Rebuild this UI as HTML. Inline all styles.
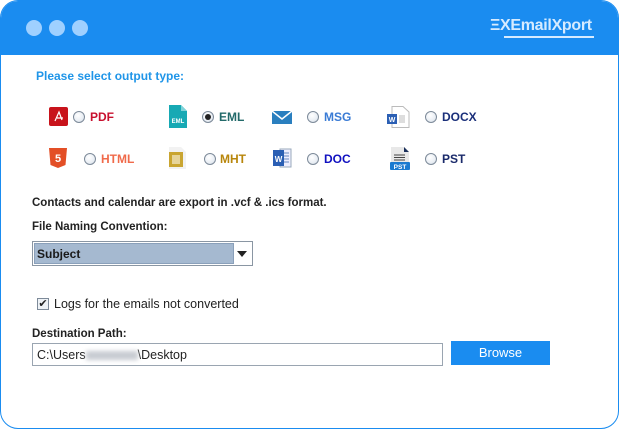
<!DOCTYPE html>
<html><head><meta charset="utf-8"><style>
*{margin:0;padding:0;box-sizing:border-box}
body{width:620px;height:430px;background:#fff;font-family:"Liberation Sans",Arial,sans-serif;position:relative;overflow:hidden}
.win{position:absolute;left:0;top:0;width:619px;height:429px;border:1.5px solid #1a8cf0;border-radius:18px;overflow:hidden;background:#fff}
.hdr{position:absolute;left:0;top:0;width:100%;height:54px;background:#1a8cf0}
.dot{position:absolute;top:19px;width:16px;height:16px;border-radius:50%;background:#9fd0ff}
.a{position:absolute;white-space:nowrap}
.lbl{font-weight:bold;font-size:12px;line-height:14px}
.radio{position:absolute;width:12px;height:12px;border-radius:50%;border:1px solid #7d8a99;background:radial-gradient(circle at 40% 35%,#fff 0,#e9eef4 60%,#c9d2dc 100%)}
.radio.on::after{content:"";position:absolute;left:2px;top:2px;width:6px;height:6px;border-radius:50%;background:#222}
.b11{font-weight:bold;font-size:11.5px;color:#222}
</style></head><body>
<div class="win">
<div class="hdr"></div>
<div class="dot" style="left:25px"></div><div class="dot" style="left:48px"></div><div class="dot" style="left:71px"></div>
<div class="a" style="left:489px;top:16px;color:#d6ebff;font-size:16px;font-weight:bold;letter-spacing:-0.3px">ΞX<span>EmailXport</span></div>
<div class="a" style="left:503px;top:35px;width:90px;height:1.5px;background:#d6ebff"></div>

<div class="a" style="left:35px;top:68px;color:#1f95e8;font-weight:bold;font-size:12px">Please select output type:</div>

<!-- row1 -->
<svg class="a" style="left:48px;top:106px" width="19" height="19"><rect width="19" height="19" rx="2" fill="#c8131b"/><path d="M6 14 L10 5 L13 13 M8 11 h6" stroke="#fff" stroke-width="1.2" fill="none"/></svg>
<div class="radio" style="left:72px;top:110px"></div>
<div class="a lbl" style="left:89px;top:109px;color:#c8102e">PDF</div>

<svg class="a" style="left:168px;top:104px" width="18" height="23"><path d="M0 0 H12 L18 6 V23 H0Z" fill="#17a9b4"/><path d="M12 0 V6 H18" fill="#7fd3d9"/><text x="9" y="18" font-size="6" font-weight="bold" fill="#fff" text-anchor="middle" font-family="Liberation Sans">EML</text></svg>
<div class="radio on" style="left:201px;top:110px"></div>
<div class="a lbl" style="left:218px;top:109px;color:#236a6a">EML</div>

<svg class="a" style="left:271px;top:110px" width="20" height="13"><rect width="20" height="13" fill="#2a7fbf"/><path d="M0 0 L10 8 L20 0" stroke="#fff" stroke-width="1.5" fill="none"/></svg>
<div class="radio" style="left:306px;top:110px"></div>
<div class="a lbl" style="left:323px;top:109px;color:#3a7bd5">MSG</div>

<svg class="a" style="left:385px;top:105px" width="24" height="22"><path d="M6 0.5 H17 L23 6 V21.5 H6Z" fill="#fff" stroke="#bbb"/><rect x="1" y="8" width="10" height="10" fill="#2b5fb4"/><text x="6" y="16" font-size="7" font-weight="bold" fill="#fff" text-anchor="middle" font-family="Liberation Sans">W</text><rect x="13" y="9" width="6" height="8" fill="#ddd"/></svg>
<div class="radio" style="left:424px;top:110px"></div>
<div class="a lbl" style="left:441px;top:109px;color:#1a2f7a">DOCX</div>

<!-- row2 -->
<svg class="a" style="left:48px;top:147px" width="18" height="20"><path d="M0 0 H18 L16.5 17 L9 20 L1.5 17Z" fill="#e34f26"/><text x="9" y="14" font-size="11" font-weight="bold" fill="#fff" text-anchor="middle" font-family="Liberation Sans">5</text></svg>
<div class="radio" style="left:83px;top:152px"></div>
<div class="a lbl" style="left:100px;top:151px;color:#f06a4a">HTML</div>

<svg class="a" style="left:166px;top:146px" width="20" height="22"><path d="M2 0 H14 L19 5 V22 H2Z" fill="#f2f2f2"/><rect x="2" y="5" width="14" height="15" fill="#c9a531"/><rect x="5" y="8" width="8" height="9" fill="#e6d49a"/></svg>
<div class="radio" style="left:203px;top:152px"></div>
<div class="a lbl" style="left:219px;top:151px;color:#b8860b">MHT</div>

<svg class="a" style="left:272px;top:147px" width="19" height="20"><rect x="7" y="1" width="11" height="18" fill="#eef" stroke="#9ab"/><path d="M9 5h7M9 8h7M9 11h7M9 14h7" stroke="#6a8ac0"/><rect x="0" y="2" width="11" height="16" fill="#2b5fb4"/><text x="5.5" y="14" font-size="8" font-weight="bold" fill="#fff" text-anchor="middle" font-family="Liberation Sans">W</text></svg>
<div class="radio" style="left:306px;top:152px"></div>
<div class="a lbl" style="left:323px;top:151px;color:#1010c0">DOC</div>

<svg class="a" style="left:389px;top:146px" width="20" height="24"><path d="M1 0 H14 L19 5 V23 H1Z" fill="#e8e8e8"/><path d="M14 0 V5 H19Z" fill="#1a2f5a"/><path d="M4 8h11M4 10.5h11M4 13h11" stroke="#444" stroke-width="1"/><rect x="0" y="15" width="20" height="8" rx="1" fill="#1a7ad0"/><text x="10" y="22" font-size="6.5" font-weight="bold" fill="#fff" text-anchor="middle" font-family="Liberation Sans">PST</text></svg>
<div class="radio" style="left:424px;top:152px"></div>
<div class="a lbl" style="left:441px;top:151px;color:#1a2a6a">PST</div>

<div class="a b11" style="left:31px;top:196px">Contacts and calendar are export in .vcf &amp; .ics format.</div>
<div class="a b11" style="left:31px;top:220px">File Naming Convention:</div>
<div class="a" style="left:31px;top:240px;width:221px;height:25px;border:1px solid #8a96a3;background:#fff">
 <div style="position:absolute;left:1px;top:1px;width:200px;height:21px;background:#a5b9d0;border:1px solid #8aa0ba"></div>
 <div style="position:absolute;left:4px;top:5px;font-weight:bold;font-size:12px;color:#1a1a1a">Subject</div>
 <div style="position:absolute;left:204px;top:9px;width:0;height:0;border-left:5px solid transparent;border-right:5px solid transparent;border-top:6px solid #222"></div>
</div>

<div class="a" style="left:36px;top:297px;width:12px;height:12px;border:1px solid #7d8a99;background:#eef2f6;font-size:11px;line-height:10px;text-align:center;color:#222">✔</div>
<div class="a" style="left:53px;top:296px;font-size:12.5px;color:#222">Logs for the emails not converted</div>

<div class="a b11" style="left:31px;top:327px">Destination Path:</div>
<div class="a" style="left:31px;top:342px;width:411px;height:23px;border:1px solid #9aa5b1;background:#fff">
 <div style="position:absolute;left:4px;top:4px;font-size:12.5px;color:#222;white-space:nowrap">C:\Users<span style="display:inline-block;width:52px;height:9px;background:#c8ccd2;filter:blur(2px);vertical-align:middle"></span>\Desktop</div>
</div>
<div class="a" style="left:450px;top:340px;width:99px;height:24px;background:#1a8cf0;color:#fff;font-size:13px;text-align:center;line-height:24px">Browse</div>
</div>
</body></html>
